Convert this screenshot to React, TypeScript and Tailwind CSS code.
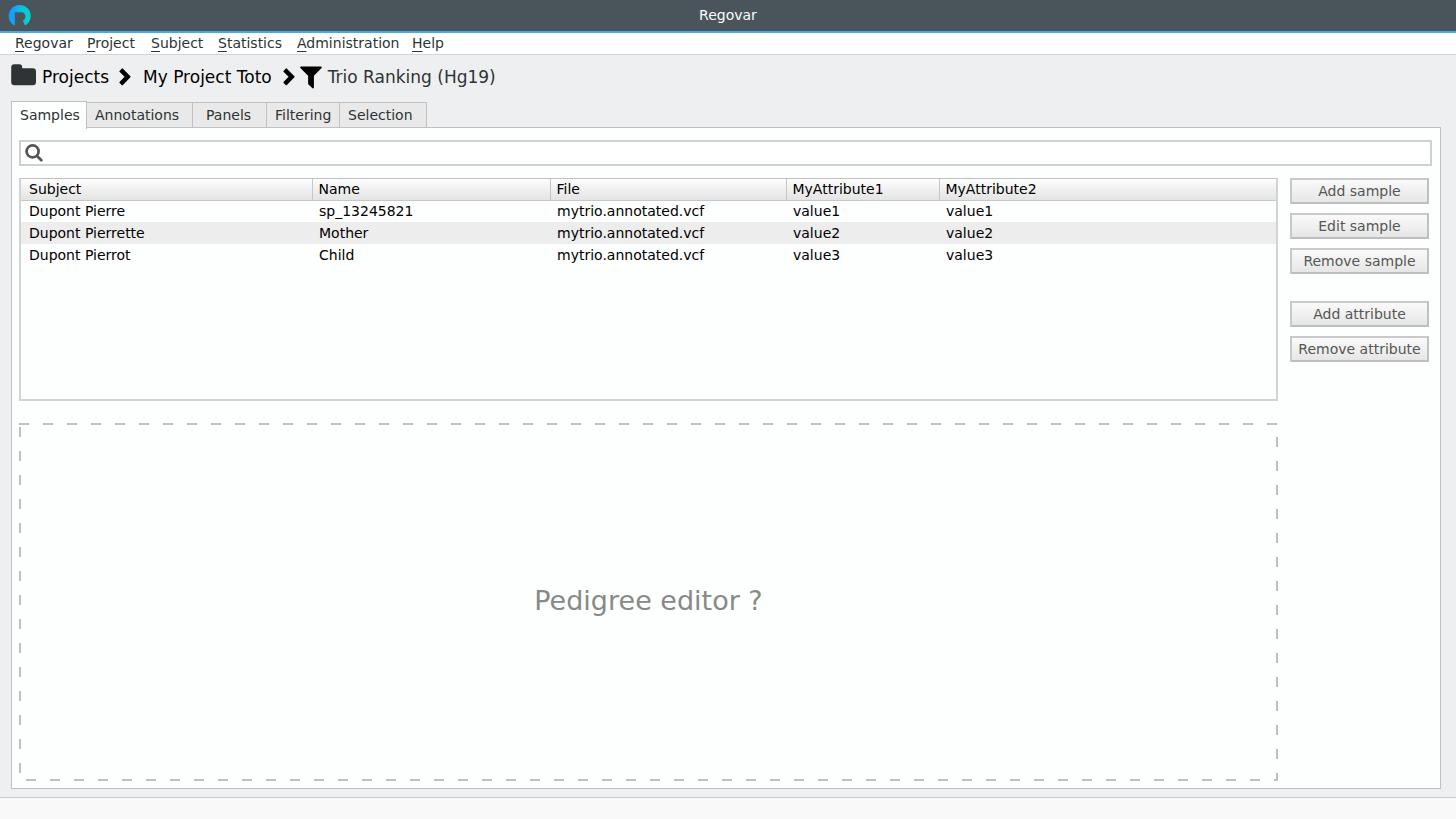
import type { ReactNode } from "react";

const menus = [
  { label: "Regovar", width: "w-[72px]" },
  { label: "Project", width: "w-[64px]" },
  { label: "Subject", width: "w-[67px]" },
  { label: "Statistics", width: "w-[79px]" },
  { label: "Administration", width: "w-[115px]" },
  { label: "Help", width: "w-[40px]" },
];

const tabs = [
  { label: "Annotations", width: "w-[106px]", pad: "pl-2" },
  { label: "Panels", width: "w-[74px]", pad: "pl-[13px]" },
  { label: "Filtering", width: "w-[73px]", pad: "pl-2" },
  { label: "Selection", width: "w-[87px]", pad: "pl-2" },
];

const columns = [
  { label: "Subject", width: "w-[291px]" },
  { label: "Name", width: "w-[238px]" },
  { label: "File", width: "w-[236px]" },
  { label: "MyAttribute1", width: "w-[153px]" },
  { label: "MyAttribute2", width: "" },
];

const rows = [
  ["Dupont Pierre", "sp_13245821", "mytrio.annotated.vcf", "value1", "value1"],
  ["Dupont Pierrette", "Mother", "mytrio.annotated.vcf", "value2", "value2"],
  ["Dupont Pierrot", "Child", "mytrio.annotated.vcf", "value3", "value3"],
];

function Logo() {
  return (
    <svg viewBox="0 0 24 24" className="size-6" aria-hidden="true">
      <defs>
        <linearGradient id="logo" x1="0" y1="0" x2="1" y2="0">
          <stop offset="0.1" stopColor="#149bff" />
          <stop offset="0.85" stopColor="#08cfcf" />
        </linearGradient>
      </defs>
      <path
        fill="url(#logo)"
        d="M6.8 21.8 A11 11 0 1 1 17 21.6 L14.9 16.8 C16.3 16 17.3 14.6 17.3 12.6 C17.3 10 15.8 8.3 13.4 8.3 H6.8 Z"
      />
    </svg>
  );
}

function FolderIcon() {
  return (
    <svg viewBox="0 0 25 22" className="h-[22px] w-[25px]" aria-hidden="true">
      <path
        fill="#2e3436"
        d="M3.4 0.3 H8.2 Q11.2 0.3 11.2 3.4 V4.2 H21.8 Q25 4.2 25 7.4 V18 Q25 21.2 21.8 21.2 H3.4 Q0.2 21.2 0.2 18 V3.4 Q0.2 0.3 3.4 0.3 Z"
      />
    </svg>
  );
}

function ChevronIcon() {
  return (
    <svg viewBox="0 0 12 18" className="h-[18px] w-3" aria-hidden="true">
      <path
        fill="#000"
        d="M0.5 3 L2.9 0.5 Q3.3 0.2 3.7 0.5 L11.4 8.3 Q11.8 8.8 11.4 9.3 L3.7 17.2 Q3.3 17.5 2.9 17.2 L0.5 14.8 Q0.2 14.4 0.5 14 L5.6 8.8 L0.5 3.8 Q0.2 3.4 0.5 3 Z"
      />
    </svg>
  );
}

function FilterIcon() {
  return (
    <svg viewBox="0 0 22 23" className="h-[23px] w-[22px]" aria-hidden="true">
      <path
        fill="#000"
        d="M1 0.5 H21 Q22.2 0.7 21.6 1.9 L13.9 9.8 V21.6 Q13.6 22.8 12.5 22.2 L8.5 18.5 Q8.1 18.1 8.1 17.5 V9.8 L0.4 1.9 Q-0.2 0.7 1 0.5 Z"
      />
    </svg>
  );
}

function SearchIcon() {
  return (
    <svg viewBox="0 0 18 18" className="size-[18px]" fill="none" stroke="#555753" aria-hidden="true">
      <circle cx="7.6" cy="7.4" r="6" strokeWidth="2.7" />
      <path d="M12 11.9 L16.3 16.2" strokeWidth="2.8" strokeLinecap="round" />
    </svg>
  );
}

function SideButton({ children }: { children: ReactNode }) {
  return (
    <button
      type="button"
      className="h-[26px] w-full whitespace-nowrap border-2 border-[#c9c9c9] border-r-[#c0c0c0] border-b-[#bebebe] bg-linear-to-b from-[#fafafa] to-[#e6e6e6] text-center leading-5 text-[#555753]"
    >
      {children}
    </button>
  );
}

export default function App() {
  return (
    <div className="flex min-h-screen flex-col bg-[#eeeff1] font-['DejaVu_Sans',sans-serif] text-[14px] leading-5 text-[#2e3436]">
      <header className="grid h-[33px] grid-cols-[1fr_auto_1fr] items-center border-b-2 border-[#3daee9] bg-[#4a555b] px-2">
        <Logo />
        <h1 className="pb-[2px] text-[#fcfcfc]">Regovar</h1>
      </header>

      <nav aria-label="Main menu" className="flex h-[22px] items-center border-b border-[#d5d5d5] bg-white pb-[2px] pl-[15px]">
        {menus.map((m) => (
          <button key={m.label} type="button" className={`text-left ${m.width}`}>
            <span className="underline decoration-1 underline-offset-[3px]">{m.label[0]}</span>
            {m.label.slice(1)}
          </button>
        ))}
      </nav>

      <nav aria-label="Breadcrumb" className="flex h-[46px] items-center pb-[2px] pl-[11px] text-[17px] leading-6">
        <a href="#projects" className="flex items-center gap-[6px] text-black">
          <span className="pb-1">
            <FolderIcon />
          </span>
          Projects
        </a>
        <span className="pr-3 pl-[10px]">
          <ChevronIcon />
        </span>
        <a href="#project" className="text-black">
          My Project Toto
        </a>
        <span className="pr-[5px] pl-[11px]">
          <ChevronIcon />
        </span>
        <span className="flex items-center gap-[6px]">
          <FilterIcon />
          Trio Ranking (Hg19)
        </span>
      </nav>

      <main className="flex flex-1 flex-col pr-[15px] pb-2 pl-[11px]">
        <div role="tablist" className="-mb-px flex h-[27px] items-end">
          <button
            type="button"
            role="tab"
            aria-selected="true"
            className="relative h-[28px] w-[76px] self-start border border-b-0 border-[#c0c2c1] bg-[#fdfefe] pb-[2px] pl-2 text-left"
          >
            Samples
          </button>
          {tabs.map((t) => (
            <button
              key={t.label}
              type="button"
              role="tab"
              aria-selected="false"
              className={`h-[26px] border-t border-r border-[#c0c2c1] bg-[#e9e9e9] pb-[2px] text-left ${t.width} ${t.pad}`}
            >
              {t.label}
            </button>
          ))}
        </div>

        <div className="flex flex-1 flex-col border border-[#c0c2c1] bg-[#fdfefe] pt-3 pr-2 pb-[7px] pl-[7px]">
          <label className="flex h-[26px] items-center gap-2 border-2 border-[#cfd0d0] bg-white pl-1">
            <SearchIcon />
            <input type="text" aria-label="Search" className="min-w-0 flex-1 bg-transparent outline-none" />
          </label>

          <div className="mt-3 flex flex-1 gap-3 pr-[3px]">
            <div className="flex min-w-0 flex-1 flex-col">
              <div className="min-h-[223px] border-2 border-t border-[#d2d4d3] border-t-[#c0c2c1] text-black">
                <table className="w-full table-fixed border-collapse text-left">
                  <thead>
                    <tr className="h-[21px] bg-linear-to-b from-[#fdfdfd] to-[#e4e4e4]">
                      {columns.map((c) => (
                        <th
                          key={c.label}
                          className={`border-r border-b border-[#c6c8c7] px-[6px] py-0 font-normal first:pl-2 last:border-r-0 ${c.width}`}
                        >
                          {c.label}
                        </th>
                      ))}
                    </tr>
                  </thead>
                  <tbody>
                    {rows.map((r) => (
                      <tr key={r[0]} className="h-[22px] even:bg-[#ededed]">
                        {r.map((cell, i) => (
                          <td key={i} className="px-[7px] py-0 first:pl-2">
                            {cell}
                          </td>
                        ))}
                      </tr>
                    ))}
                  </tbody>
                </table>
              </div>

              <section className="mt-[22px] flex flex-1 items-center justify-center bg-[linear-gradient(90deg,#bfc0c0_10px,transparent_10px),linear-gradient(90deg,#bfc0c0_10px,transparent_10px),linear-gradient(180deg,#bfc0c0_10px,transparent_10px),linear-gradient(180deg,#bfc0c0_10px,transparent_10px)] bg-[length:24px_2px,24px_2px,2px_24px,2px_24px] bg-[position:left_0_top_0,left_7px_bottom_0,left_0_top_4px,right_0_top_14px] [background-repeat:repeat-x,repeat-x,repeat-y,repeat-y]">
                <h2 className="pb-[2px] text-[27px] leading-8 text-[#888a85]">Pedigree editor ?</h2>
              </section>
            </div>

            <aside className="flex w-[139px] flex-col gap-[9px]">
              <SideButton>Add sample</SideButton>
              <SideButton>Edit sample</SideButton>
              <SideButton>Remove sample</SideButton>
              <div className="mt-[18px] flex flex-col gap-[9px]">
                <SideButton>Add attribute</SideButton>
                <SideButton>Remove attribute</SideButton>
              </div>
            </aside>
          </div>
        </div>
      </main>

      <footer className="h-[22px] border-t border-[#c6c8c9] bg-[#f9f9f9]" />
    </div>
  );
}
